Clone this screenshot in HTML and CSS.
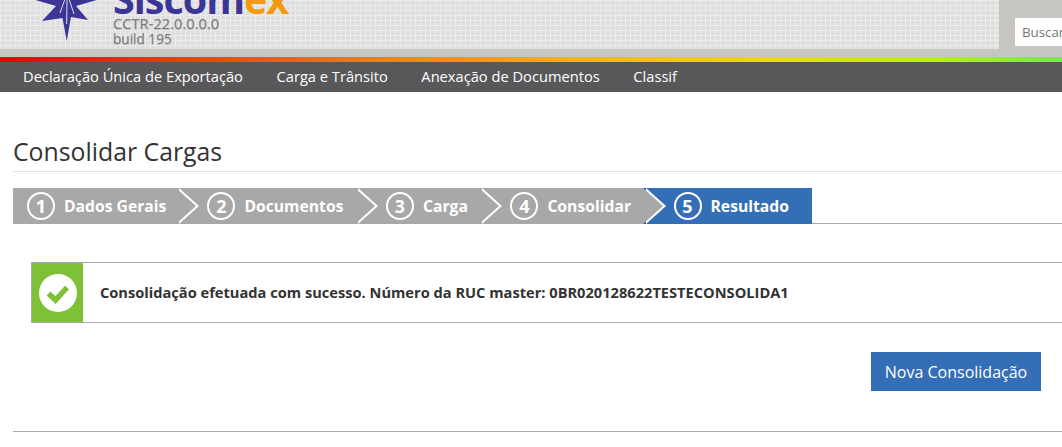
FILE: index.html
```html
<!DOCTYPE html>
<html lang="pt-BR">
<head>
  <meta charset="UTF-8" />
  <title>Consolidar Cargas - Siscomex</title>
  <link rel="stylesheet" href="styles.css">
</head>
<body>
  <header class="topo">
    <div class="topo-marca">
      <svg class="estrela" width="90" height="49" viewBox="0 0 90 49">
        <path fill="#3b3596" d="M46.7 41 L42.5 18 L22 21 L36 6 L12 -1 L80 -1 L56 6 L68 20 L51 17 Z"/>
        <path fill="none" stroke="#dfe0ea" stroke-width="1" d="M45 -1 L40 13 M47 -1 L46.7 24 M49 -1 L54 14"/>
      </svg>
      <div class="marca-textos">
        <div class="marca-nome">Siscom<span>ex</span></div>
        <div class="versao">CCTR-22.0.0.0.0</div>
        <div class="build">build 195</div>
      </div>
    </div>
    <div class="topo-busca">
      <input class="busca" type="text" placeholder="Buscar" />
    </div>
  </header>
  <div class="faixa"></div>
  <nav class="menu">
    <a href="#">Declaração Única de Exportação</a>
    <a href="#">Carga e Trânsito</a>
    <a href="#">Anexação de Documentos</a>
    <a href="#">Classif</a>
  </nav>

  <main class="conteudo">
    <h1 class="titulo">Consolidar Cargas</h1>

    <div class="passos">
      <div class="passo"><span class="num">1</span>Dados Gerais</div>
      <div class="passo"><span class="num">2</span>Documentos</div>
      <div class="passo"><span class="num">3</span>Carga</div>
      <div class="passo"><span class="num">4</span>Consolidar</div>
      <div class="passo ativo"><span class="num">5</span>Resultado</div>
    </div>

    <div class="alerta">
      <div class="alerta-icone">
        <svg width="38" height="38" viewBox="0 0 38 38">
          <circle cx="19" cy="19" r="19" fill="#fff"/>
          <path d="M9.5 19.5 L16.5 26 L28 13.5" fill="none" stroke="#7fc136" stroke-width="5.5"/>
        </svg>
      </div>
      <p class="alerta-texto">Consolidação efetuada com sucesso. Número da RUC master: 0BR020128622TESTECONSOLIDA1</p>
    </div>

    <div class="acoes">
      <button class="botao" type="button">Nova Consolidação</button>
    </div>
  </main>
</body>
</html>
```

FILE: styles.css
```css
html, body {
  margin: 0;
  padding: 0;
  overflow: hidden;
}

body {
  width: 1062px;
  height: 447px;
  background: #fff;
  font-family: 'Open Sans', sans-serif;
  color: #333;
}

.topo {
  display: flex;
  justify-content: space-between;
  height: 57px;
  background: #c8c6c3;
}

.topo-marca {
  display: flex;
  width: 999px;
  height: 49px;
  overflow: hidden;
  background-color: #dfdfdf;
  background-image: linear-gradient(#ececec 1px, transparent 1px), linear-gradient(90deg, #ececec 1px, transparent 1px);
  background-size: 5px 5px;
}

.estrela {
  margin-left: 20px;
  flex: none;
}

.marca-textos {
  margin-left: 3px;
  margin-top: -18px;
}

.marca-nome {
  font-size: 39.5px;
  line-height: 34px;
  height: 34px;
  font-weight: 700;
  color: #3b3596;
  letter-spacing: -1px;
}

.marca-nome span {
  color: #f59a0c;
}

.versao, .build {
  color: #7a7a7a;
  font-size: 14.7px;
  line-height: 15px;
  text-shadow: 0 1px 1px #bbb;
}

.build {
  font-size: 13.6px;
}

.topo-busca {
  width: 47px;
  padding-top: 18px;
  overflow: hidden;
}

.busca {
  display: block;
  box-sizing: border-box;
  width: 120px;
  height: 28px;
  border: none;
  padding: 0 0 0 7px;
  font-family: 'Open Sans', sans-serif;
  font-size: 13.3px;
  background: #fff;
}

.busca::placeholder {
  color: #777;
  opacity: 1;
}

.faixa {
  height: 5px;
  background: linear-gradient(to right, #e8000b 0%, #ff7a00 35%, #f6b800 55%, #e6dc00 72%, #b8f200 88%, #76ec30 100%);
}

.menu {
  display: flex;
  gap: 33.6px;
  height: 30px;
  padding-left: 23px;
  background: #58585a;
}

.menu a {
  color: #fff;
  font-size: 14.67px;
  line-height: 29px;
  text-decoration: none;
}

.conteudo {
  padding: 44px 0 0 13px;
}

.titulo {
  margin: 0;
  height: 35px;
  font-size: 24.8px;
  line-height: 31px;
  font-weight: 400;
  color: #333;
  border-bottom: 1px solid #e3e3e3;
}

.passos {
  display: flex;
  height: 35px;
  margin-top: 16px;
  border-bottom: 1px solid #aaa;
}

.passo {
  position: relative;
  display: flex;
  align-items: center;
  height: 36px;
  padding: 0 10px 0 14px;
  background: #a8a8a8;
  color: #fff;
  font-size: 15.7px;
  font-weight: 700;
}

.passo + .passo {
  padding: 0 11.5px 0 31px;
}

.passo:not(:last-child)::after {
  content: "";
  position: absolute;
  z-index: 1;
  top: 0;
  right: -20px;
  border-style: solid;
  border-width: 18px 0 18px 20px;
  border-color: transparent transparent transparent #a8a8a8;
  filter: drop-shadow(3px 0 0 #fff);
}

.passo.ativo {
  background: #346eb6;
  padding-right: 23px;
}

.num {
  box-sizing: border-box;
  width: 28px;
  height: 28px;
  margin-right: 9px;
  border: 2px solid #fff;
  border-radius: 50%;
  text-align: center;
  font-size: 18px;
  line-height: 24px;
}

.alerta {
  display: flex;
  align-items: center;
  height: 59px;
  margin: 38px 0 0 18px;
  border: 1px solid #aaa;
  border-right: none;
}

.alerta-icone {
  display: flex;
  align-items: center;
  justify-content: center;
  width: 51px;
  height: 59px;
  background: #7fc136;
}

.alerta-texto {
  margin: 0 0 2px 17px;
  font-size: 14.64px;
  font-weight: 700;
  color: #333;
}

.acoes {
  display: flex;
  justify-content: flex-end;
  height: 79px;
  margin: 29px 0 0 0;
  padding: 0 21px 0 0;
  border-bottom: 1px solid #aaa;
}

.botao {
  width: 170px;
  height: 39px;
  border: none;
  background: #346eb6;
  color: #fff;
  font-family: 'Open Sans', sans-serif;
  font-size: 16px;
}
```
